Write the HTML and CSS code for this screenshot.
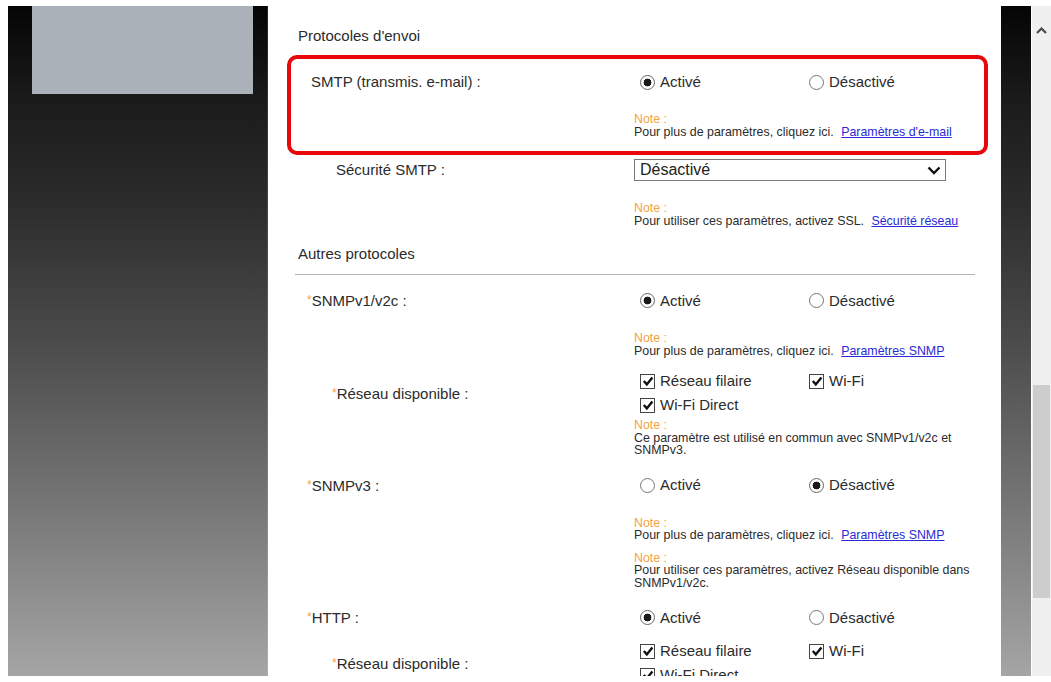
FILE: index.html
```html
<!DOCTYPE html>
<html lang="fr">
<head>
    <meta charset="UTF-8">
    <meta name="viewport" content="width=device-width, initial-scale=1.0">
    <title>Protocoles</title>
    <link rel="stylesheet" href="styles.css">
</head>
<body>
    <div class="frame">
        <!-- Left navigation column -->
        <aside class="sidebar">
            <div class="logo-box"></div>
        </aside>

        <!-- Settings form -->
        <main class="content">
            <h2 class="section-title">Protocoles d'envoi</h2>

            <div class="highlight">
                <div class="field">
                    <div class="label">SMTP (transmis. e-mail) :</div>
                    <div class="options">
                        <span class="opt"><span class="radio on"></span>Activé</span>
                        <span class="opt"><span class="radio"></span>Désactivé</span>
                    </div>
                    <div class="note">
                        <span class="note-title">Note :</span><br>
                        Pour plus de paramètres, cliquez ici. <a href="#">Paramètres d'e-mail</a>
                    </div>
                </div>
            </div>

            <div class="field field-select">
                <div class="label sub">Sécurité SMTP :</div>
                <div class="select">
                    <span>Désactivé</span>
                    <svg width="14" height="9" viewBox="0 0 14 9"><polyline points="1.5,1.5 7,7 12.5,1.5" fill="none" stroke="#111" stroke-width="2.4"/></svg>
                </div>
                <div class="note">
                    <span class="note-title">Note :</span><br>
                    Pour utiliser ces paramètres, activez SSL. <a href="#">Sécurité réseau</a>
                </div>
            </div>

            <h2 class="section-title ruled">Autres protocoles</h2>

            <div class="field field-radio first">
                <div class="label req"><span class="star">*</span>SNMPv1/v2c :</div>
                <div class="options">
                    <span class="opt"><span class="radio on"></span>Activé</span>
                    <span class="opt"><span class="radio"></span>Désactivé</span>
                </div>
                <div class="note">
                    <span class="note-title">Note :</span><br>
                    Pour plus de paramètres, cliquez ici. <a href="#">Paramètres SNMP</a>
                </div>
            </div>

            <div class="field field-checks">
                <div class="label sub-req"><span class="star">*</span>Réseau disponible :</div>
                <div class="checks">
                    <span class="opt"><span class="check"><svg width="12" height="12" viewBox="0 0 12 12"><polyline points="1.8,6 4.8,9.4 10.4,2.4" fill="none" stroke="#111" stroke-width="2.4"/></svg></span>Réseau filaire</span>
                    <span class="opt"><span class="check"><svg width="12" height="12" viewBox="0 0 12 12"><polyline points="1.8,6 4.8,9.4 10.4,2.4" fill="none" stroke="#111" stroke-width="2.4"/></svg></span>Wi-Fi</span>
                    <span class="opt"><span class="check"><svg width="12" height="12" viewBox="0 0 12 12"><polyline points="1.8,6 4.8,9.4 10.4,2.4" fill="none" stroke="#111" stroke-width="2.4"/></svg></span>Wi-Fi Direct</span>
                </div>
                <div class="note tight">
                    <span class="note-title">Note :</span><br>
                    Ce paramètre est utilisé en commun avec SNMPv1/v2c et<br>
                    SNMPv3.
                </div>
            </div>

            <div class="field field-radio">
                <div class="label req"><span class="star">*</span>SNMPv3 :</div>
                <div class="options">
                    <span class="opt"><span class="radio"></span>Activé</span>
                    <span class="opt"><span class="radio on"></span>Désactivé</span>
                </div>
                <div class="note">
                    <span class="note-title">Note :</span><br>
                    Pour plus de paramètres, cliquez ici. <a href="#">Paramètres SNMP</a>
                </div>
                <div class="note">
                    <span class="note-title">Note :</span><br>
                    Pour utiliser ces paramètres, activez Réseau disponible dans<br>
                    SNMPv1/v2c.
                </div>
            </div>

            <div class="field field-radio">
                <div class="label req"><span class="star">*</span>HTTP :</div>
                <div class="options">
                    <span class="opt"><span class="radio on"></span>Activé</span>
                    <span class="opt"><span class="radio"></span>Désactivé</span>
                </div>
            </div>

            <div class="field field-checks short">
                <div class="label sub-req"><span class="star">*</span>Réseau disponible :</div>
                <div class="checks">
                    <span class="opt"><span class="check"><svg width="12" height="12" viewBox="0 0 12 12"><polyline points="1.8,6 4.8,9.4 10.4,2.4" fill="none" stroke="#111" stroke-width="2.4"/></svg></span>Réseau filaire</span>
                    <span class="opt"><span class="check"><svg width="12" height="12" viewBox="0 0 12 12"><polyline points="1.8,6 4.8,9.4 10.4,2.4" fill="none" stroke="#111" stroke-width="2.4"/></svg></span>Wi-Fi</span>
                    <span class="opt"><span class="check"><svg width="12" height="12" viewBox="0 0 12 12"><polyline points="1.8,6 4.8,9.4 10.4,2.4" fill="none" stroke="#111" stroke-width="2.4"/></svg></span>Wi-Fi Direct</span>
                </div>
            </div>
        </main>

        <!-- Right dark band + scrollbar -->
        <div class="rail"></div>
        <div class="scrollbar">
            <svg class="scroll-up" width="11" height="7" viewBox="0 0 11 7"><polyline points="1,6 5.5,1.5 10,6" fill="none" stroke="#4a4a4a" stroke-width="2.2"/></svg>
            <div class="scroll-thumb"></div>
        </div>
    </div>
</body>
</html>
```

FILE: styles.css
```css
* {
    margin: 0;
    padding: 0;
    box-sizing: border-box;
}

html, body {
    width: 100%;
    height: 100%;
    overflow: hidden;
    background: #fff;
    font-family: "Liberation Sans", Arial, sans-serif;
    color: #2b2b2b;
}

body {
    padding: 6px 0 6px 8px;
}

.frame {
    display: flex;
    height: 670px;
}

/* Dark columns */
.sidebar,
.rail {
    flex: none;
    background: linear-gradient(#050505 0%, #1c1c1c 15%, #2d2d2d 30%, #4b4b4b 50%, #777 75%, #a5a5a5 100%);
}

.sidebar {
    width: 260px;
    box-shadow: inset -1px 0 rgba(255, 255, 255, 0.12);
}

.logo-box {
    margin-left: 24px;
    width: 221px;
    height: 88px;
    background: #abb1b9;
}

.rail {
    width: 30px;
}

.scrollbar {
    flex: none;
    width: 19px;
    margin-left: 1px;
    background: #f0f0f0;
    display: flex;
    flex-direction: column;
    align-items: center;
}

.scroll-up {
    display: block;
    margin-top: 21px;
}

.scroll-thumb {
    width: 17px;
    height: 213px;
    margin-top: 351px;
    background: #cdcdcd;
}

/* Form area */
.content {
    flex: none;
    width: 733px;
    padding: 20px 26px 0 30px;
    overflow: hidden;
}

.section-title {
    font-size: 15px;
    font-weight: normal;
    line-height: 20px;
    color: #2b2b2b;
}

.section-title.ruled {
    margin: 17px 0 0 -3px;
    padding: 0 0 10px 3px;
    border-bottom: 1px solid #b4b4b4;
}

.highlight {
    margin: 9px -13px 0 -11px;
    padding: 13px 9px 13px 7px;
    border: 4px solid #e8080b;
    border-radius: 10px;
}

.field {
    display: grid;
    grid-template-columns: 336px 1fr;
    font-size: 15px;
    line-height: 20px;
}

.field-select {
    margin-top: 4px;
}

.field-radio {
    margin-top: 18px;
}

.field-radio.first {
    margin-top: 15px;
}

.field-checks {
    margin-top: 12px;
}

.field-checks.short {
    margin-top: 11px;
}

.label {
    grid-column: 1;
    grid-row: 1;
    align-self: center;
    padding-left: 13px;
}

.label.sub {
    padding-left: 38px;
}

.label.req {
    padding-left: 9px;
}

.label.sub-req {
    padding-left: 34px;
}

.star {
    color: #f6a23f;
    font-size: 12px;
    vertical-align: 2px;
}

.options,
.checks {
    grid-column: 2;
    display: grid;
    grid-template-columns: 169px 168px;
    padding-left: 6px;
}

.checks .opt {
    line-height: 24px;
}

.opt {
    display: flex;
    align-items: center;
    gap: 5px;
}

.radio {
    flex: none;
    width: 15px;
    height: 15px;
    border: 1px solid #777;
    border-radius: 50%;
    background: #fff;
}

.radio.on {
    border-color: #666;
    background: radial-gradient(circle, #1a1a1a 0 3.6px, #fff 4.2px);
}

.check {
    flex: none;
    width: 15px;
    height: 15px;
    border: 1px solid #444;
    background: #fff;
    display: flex;
    align-items: center;
    justify-content: center;
}

.select {
    grid-column: 2;
    width: 312px;
    height: 22px;
    border: 1px solid #7a7a7a;
    padding: 0 4px 0 5px;
    display: flex;
    align-items: center;
    justify-content: space-between;
    font-size: 16px;
    color: #222;
}

.note {
    grid-column: 2;
    margin-top: 21px;
    font-size: 12.4px;
    line-height: 12.5px;
    color: #2b2b2b;
}

.note + .note {
    margin-top: 10px;
}

.note.tight {
    margin-top: 2px;
}

.note-title {
    color: #f6a23f;
}

.note a {
    margin-left: 4px;
    color: #2a2ad6;
    text-decoration: underline;
}
```
